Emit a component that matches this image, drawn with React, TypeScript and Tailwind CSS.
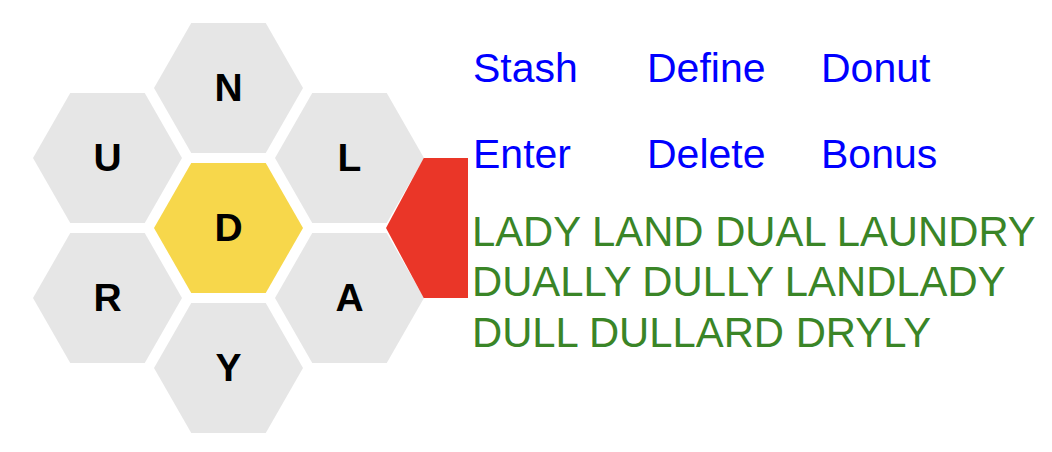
const hexClip = '[clip-path:polygon(25%_0,75%_0,100%_50%,75%_100%,25%_100%,0_50%)]';

function Cell({ letter, center = false }: { letter: string; center?: boolean }) {
  return (
    <div
      className={`${hexClip} flex h-[130px] w-[149px] items-center justify-center text-[39px] font-bold text-black ${
        center ? 'bg-[#f7d74b]' : 'bg-[#e6e6e6]'
      }`}
    >
      {letter}
    </div>
  );
}

const buttons = ['Stash', 'Define', 'Donut', 'Enter', 'Delete', 'Bonus'];
const found = ['LADY LAND DUAL LAUNDRY', 'DUALLY DULLY LANDLADY', 'DULL DULLARD DRYLY'];

export default function App() {
  return (
    <div className="flex h-[452px] w-[1052px] items-start bg-white font-['Liberation_Sans',Arial,sans-serif]">
      {/* honeycomb */}
      <div className="ml-[33px] mt-[23px] flex items-start">
        <div className="mt-[70px] flex flex-col gap-[10px]">
          <Cell letter="U" />
          <Cell letter="R" />
        </div>
        <div className="-ml-[28px] flex flex-col gap-[10px]">
          <Cell letter="N" />
          <Cell letter="D" center />
          <Cell letter="Y" />
        </div>
        <div className="-ml-[28px] mt-[70px] flex flex-col gap-[10px]">
          <Cell letter="L" />
          <Cell letter="A" />
        </div>
        {/* shuffle / pointer */}
        <div className="-ml-[38px] mt-[135px] h-[140px] w-[82px] bg-[#ea3628] [clip-path:polygon(46%_0,100%_0,100%_100%,46%_100%,0_50%)]" />
      </div>

      <div className="ml-[4px] mt-[45px] flex flex-col">
        <div className="ml-[1px] grid grid-cols-[174px_174px_174px] gap-y-[40px] text-[41px] leading-[46px] text-[#0000ff]">
          {buttons.map((b) => (
            <span key={b}>{b}</span>
          ))}
        </div>
        <div className="mt-[30px] text-[41.8px] leading-[50.4px] text-[#3a8527]">
          {found.map((w) => (
            <div key={w} className="whitespace-nowrap">
              {w}
            </div>
          ))}
        </div>
      </div>
    </div>
  );
}
